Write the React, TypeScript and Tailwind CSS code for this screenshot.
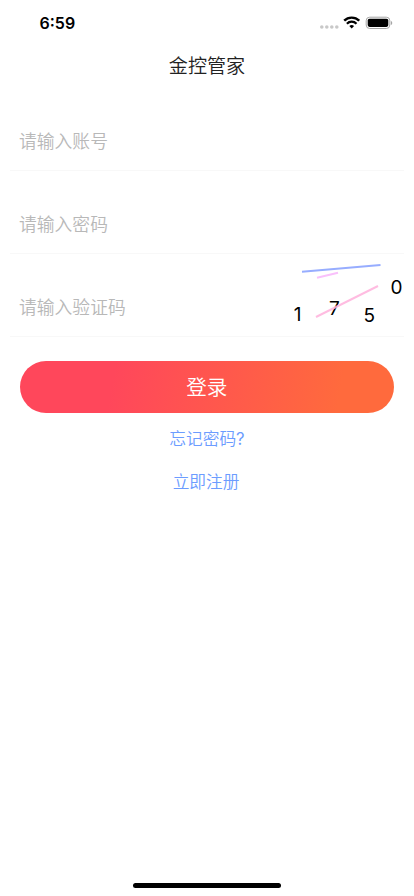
import React from "react";

function StatusBar() {
  return (
    <div className="flex h-11 items-start justify-between pl-[39.5px] pr-[21px] text-black">
      <span className="mt-[11px] font-['Inter','Liberation_Sans',sans-serif] text-[16px] leading-6 font-semibold">
        6<span className="relative -top-px">:</span>59
      </span>
      <div className="mt-4 flex items-center">
        <svg width="20" height="14" viewBox="0 0 20 14" fill="#c8c8c8">
          <circle cx="2.8" cy="11" r="1.8" />
          <circle cx="7.8" cy="11" r="1.8" />
          <circle cx="12.8" cy="11" r="1.8" />
          <circle cx="17.8" cy="11" r="1.8" />
        </svg>
        <svg className="ml-[4px]" width="17" height="14" viewBox="0 0 17 14" fill="none" stroke="#000">
          <path d="M1.2 4.7A10.6 10.6 0 0 1 16.2 4.7" strokeWidth="2.4" />
          <path d="M3.9 7.7A6.8 6.8 0 0 1 13.5 7.7" strokeWidth="2.3" />
          <path d="M6.3 10.1A3.4 3.4 0 0 1 11.1 10.1L8.7 12.4Z" fill="#000" stroke="none" />
        </svg>
        <svg className="ml-[5px]" width="28" height="14" viewBox="0 0 28 14">
          <rect x="1.2" y="1.2" width="23.6" height="11.3" rx="3.5" fill="none" stroke="#a5a5a5" />
          <rect x="2.7" y="2.8" width="20.6" height="8.1" rx="1.8" fill="#000" />
          <path d="M25.9 5v4c.8-.3 1.3-1.1 1.3-2s-.5-1.7-1.3-2Z" fill="#a5a5a5" />
        </svg>
      </div>
    </div>
  );
}

function Captcha() {
  return (
    <svg width="122" height="82" viewBox="282 254 122 82" className="shrink-0 overflow-visible font-['Inter','Liberation_Sans',sans-serif] text-[19px] font-normal">
      <g fill="#000">
        <text x="293.7" y="320.5">1</text>
        <text x="329" y="315">7</text>
        <text x="363.5" y="321.8">5</text>
        <text x="390.5" y="294">0</text>
      </g>
      <path d="M302 271.8L380.5 265" stroke="#97adff" strokeWidth="2" />
      <path d="M317 277.8L338 272.7" stroke="#f9c0fb" strokeWidth="2" />
      <path d="M316 317L378 286" stroke="#ffb0dc" strokeOpacity="0.85" strokeWidth="2" />
    </svg>
  );
}

function Field({ placeholder, type = "text", children }: { placeholder: string; type?: string; children?: React.ReactNode }) {
  return (
    <div className="mx-2.5 flex h-[83px] border-b border-[#f8f8f8] pl-[9px]">
      <input
        type={type}
        placeholder={placeholder}
        className="mt-[38px] h-7 min-w-0 flex-1 bg-transparent text-[17.8px] outline-none placeholder:text-[#b8b8b8]"
      />
      {children}
    </div>
  );
}

export default function App() {
  return (
    <main className="flex h-[896px] w-[414px] flex-col overflow-hidden bg-white font-['Noto_Sans_CJK_SC_DemiLight','Noto_Sans_CJK_SC',sans-serif] font-[350]">
      <StatusBar />
      <h1 className="flex h-11 items-center justify-center pb-0.5 text-[19.1px] leading-7 font-[350] text-[#222]">金控管家</h1>
      <Field placeholder="请输入账号" />
      <Field placeholder="请输入密码" type="password" />
      <Field placeholder="请输入验证码">
        <Captcha />
      </Field>
      <button className="mr-5 ml-[19.5px] mt-[24.4px] h-[52px] shrink-0 rounded-full bg-linear-[100deg,#ff475b_0%,#ff475b_25%,#ff6a3d_85%,#ff6a3d_100%] pb-0.5 text-[20.6px] leading-7 text-white">
        登录
      </button>
      <div className="mt-[14px] flex flex-col items-center gap-[17.5px] text-[16.7px] leading-6 text-[#6c9cff]">
        <a className="-mt-px">忘记密码<span className="font-['Inter',sans-serif] font-normal">?</span></a>
        <a className="mr-0.5">立即注册</a>
      </div>
      <div className="mx-auto mt-auto mb-2 h-[5px] w-[148px] rounded-full bg-black" />
    </main>
  );
}
